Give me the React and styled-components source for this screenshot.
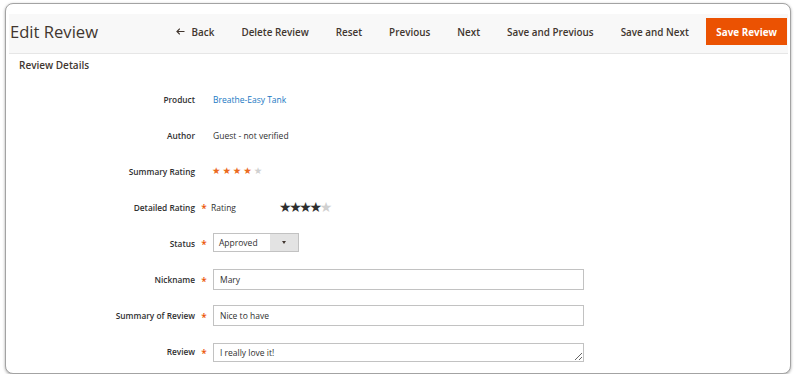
import React from "react";
import styled, { createGlobalStyle } from "styled-components";

const GlobalStyle = createGlobalStyle`
  html, body {
    margin: 0;
    padding: 0;
    background: #ffffff;
  }
  body {
    font-family: "Open Sans", "Liberation Sans", sans-serif;
    color: #303030;
  }
`;

const Frame = styled.div`
  box-sizing: border-box;
  margin: 3px 0 0 5px;
  width: 786px;
  height: 371px;
  padding: 10px 2px 0 3px;
  border: 1px solid #a3a3a3;
  border-radius: 8px;
  box-shadow: 0 1px 3px rgba(0, 0, 0, 0.35);
  overflow: hidden;
  background: #fff;
`;

const Header = styled.div`
  display: flex;
  align-items: center;
  height: 40px;
  padding-bottom: 4px;
  background: #f8f8f8;
  border-bottom: 1px solid #e6e6e6;
  box-sizing: border-box;
`;

const Title = styled.h1`
  margin: 0 0 0 1px;
  font-size: 16.6px;
  font-weight: 400;
  color: #41362f;
  flex: 1;
`;

const Actions = styled.div`
  display: flex;
  align-items: center;
`;

const ActionButton = styled.button`
  border: 0;
  background: ${(p) => (p.$primary ? "#eb5202" : "transparent")};
  color: ${(p) => (p.$primary ? "#ffffff" : "#41362f")};
  font-family: "Open Sans", "Liberation Sans", sans-serif;
  font-size: 9.9px;
  font-weight: ${(p) => (p.$primary ? 700 : 600)};
  height: 27px;
  padding: ${(p) => (p.$primary ? "0 10px" : "0 13.5px")};
  margin-right: ${(p) => (p.$primary ? "1px" : "0")};
  margin-left: ${(p) => (p.$primary ? "4px" : "0")};
  display: flex;
  align-items: center;
  gap: 7px;
  cursor: pointer;
  white-space: nowrap;
`;

const Section = styled.div`
  padding: 3px 0 0 10px;
`;

const SectionTitle = styled.div`
  font-size: 10px;
  font-weight: 600;
  color: #41362f;
  height: 14px;
  line-height: 14px;
  margin-top: 1px;
`;

const Form = styled.div`
  display: flex;
  flex-direction: column;
  gap: 16px;
  margin-top: 17px;
`;

const Row = styled.div`
  display: grid;
  grid-template-columns: 176px 18px 1fr;
  align-items: center;
  height: 20px;
`;

const Label = styled.div`
  text-align: right;
  font-size: 8.3px;
  font-weight: 600;
  color: #303030;
  white-space: nowrap;
`;

const Required = styled.span`
  text-align: center;
  color: #eb5202;
  font-size: 10px;
  font-weight: 600;
  padding-top: 2px;
`;

const Value = styled.div`
  font-size: 8.5px;
  color: #303030;
  display: flex;
  align-items: center;
`;

const Link = styled.a`
  color: #1979c3;
  text-decoration: none;
  font-size: 8.5px;
`;

const Stars = styled.div`
  display: flex;
  font-family: "DejaVu Sans", sans-serif;
  font-size: ${(p) => p.$size}px;
  letter-spacing: ${(p) => p.$spacing}px;
  line-height: 1;
  margin-left: ${(p) => p.$offset || 0}px;
`;

const Star = styled.span`
  color: ${(p) => (p.$on ? p.$color : "#d0d0d0")};
`;

const RatingName = styled.span`
  font-size: 8.5px;
  margin-left: -2px;
  width: 69px;
`;

const Input = styled.input`
  box-sizing: border-box;
  width: 371px;
  height: 21px;
  border: 1px solid #c2c2c2;
  padding: 0 6px;
  font-family: "Open Sans", "Liberation Sans", sans-serif;
  font-size: 8.5px;
  color: #303030;
  outline: none;
`;

const TextArea = styled.textarea`
  box-sizing: border-box;
  width: 371px;
  height: 19px;
  border: 1px solid #c2c2c2;
  padding: 3px 6px 0;
  font-family: "Open Sans", "Liberation Sans", sans-serif;
  font-size: 8.5px;
  color: #303030;
  outline: none;
  resize: vertical;
  overflow: hidden;
  margin-top: 2px;
`;

const Select = styled.div`
  box-sizing: border-box;
  width: 86px;
  height: 19px;
  border: 1px solid #c2c2c2;
  display: flex;
  align-items: stretch;
  font-size: 8.5px;
  margin-top: -2px;
`;

const SelectText = styled.div`
  flex: 1;
  display: flex;
  align-items: center;
  padding-left: 5px;
`;

const SelectArrow = styled.div`
  width: 28px;
  background: #e3e3e3;
  display: flex;
  align-items: center;
  justify-content: center;
  &::after {
    content: "";
    border-left: 2.5px solid transparent;
    border-right: 2.5px solid transparent;
    border-top: 3px solid #41362f;
  }
`;

function StarRow({ count, size, spacing, color, offset }) {
  return (
    <Stars $size={size} $spacing={spacing} $offset={offset}>
      {[0, 1, 2, 3, 4].map((i) => (
        <Star key={i} $on={i < count} $color={color}>
          ★
        </Star>
      ))}
    </Stars>
  );
}

export default function App() {
  const actions = [
    "Delete Review",
    "Reset",
    "Previous",
    "Next",
    "Save and Previous",
    "Save and Next",
  ];

  return (
    <>
      <GlobalStyle />
      <Frame>
        <Header>
          <Title>Edit Review</Title>
          <Actions>
            <ActionButton>
              <svg width="9" height="7" viewBox="0 0 9 7">
                <path
                  d="M8.5 3.5H1.2M3.8 0.7L1 3.5l2.8 2.8"
                  stroke="#41362f"
                  strokeWidth="1.2"
                  fill="none"
                />
              </svg>
              Back
            </ActionButton>
            {actions.map((a) => (
              <ActionButton key={a}>{a}</ActionButton>
            ))}
            <ActionButton $primary>Save Review</ActionButton>
          </Actions>
        </Header>
        <Section>
          <SectionTitle>Review Details</SectionTitle>
          <Form>
            <Row>
              <Label>Product</Label>
              <span />
              <Value>
                <Link href="#">Breathe-Easy Tank</Link>
              </Value>
            </Row>
            <Row>
              <Label>Author</Label>
              <span />
              <Value>Guest - not verified</Value>
            </Row>
            <Row>
              <Label>Summary Rating</Label>
              <span />
              <Value>
                <StarRow count={4} size={9.5} spacing={1.9} color="#eb6a1e" offset={-1} />
              </Value>
            </Row>
            <Row>
              <Label>Detailed Rating</Label>
              <Required>*</Required>
              <Value>
                <RatingName>Rating</RatingName>
                <StarRow count={4} size={14} spacing={-2.4} color="#2e2e2e" offset={-1} />
              </Value>
            </Row>
            <Row>
              <Label>Status</Label>
              <Required>*</Required>
              <Value>
                <Select>
                  <SelectText>Approved</SelectText>
                  <SelectArrow />
                </Select>
              </Value>
            </Row>
            <Row>
              <Label>Nickname</Label>
              <Required>*</Required>
              <Value>
                <Input defaultValue="Mary" />
              </Value>
            </Row>
            <Row>
              <Label>Summary of Review</Label>
              <Required>*</Required>
              <Value>
                <Input defaultValue="Nice to have" />
              </Value>
            </Row>
            <Row>
              <Label>Review</Label>
              <Required>*</Required>
              <Value>
                <TextArea defaultValue="I really love it!" />
              </Value>
            </Row>
          </Form>
        </Section>
      </Frame>
    </>
  );
}
